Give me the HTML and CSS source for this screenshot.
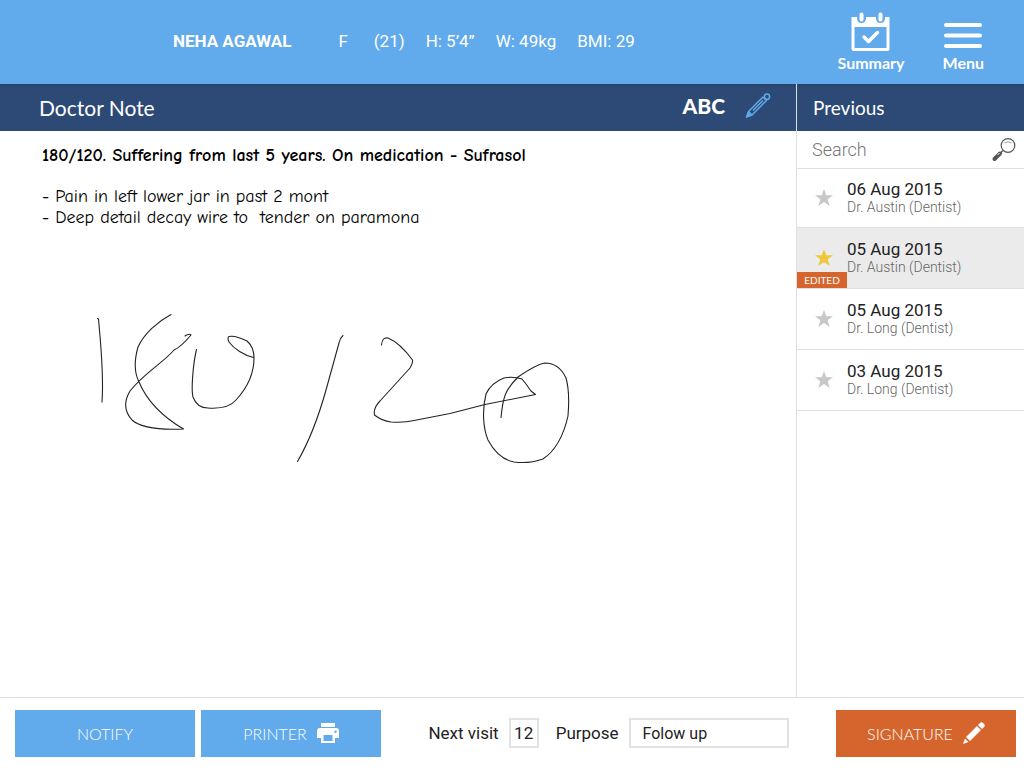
FILE: index.html
```html
<!DOCTYPE html>
<html lang="en">
<head>
<meta charset="utf-8">
<meta name="viewport" content="width=device-width, initial-scale=1">
<title>Doctor Note</title>
<link rel="stylesheet" href="styles.css">
</head>
<body class="app">
<header class="topbar">
  <div class="patient">
    <strong class="patient-name">NEHA AGAWAL</strong>
    <span class="patient-sex">F</span>
    <ul class="vitals">
      <li>(21)</li>
      <li>H: 5’4”</li>
      <li>W: 49kg</li>
      <li>BMI: 29</li>
    </ul>
  </div>
  <nav class="topnav">
    <button class="nav-button" type="button">
      <svg class="nav-icon" width="40" height="40" viewBox="0 0 40 40" aria-hidden="true">
        <path fill="#fff" fill-rule="evenodd" d="M1.500 5H6V6.500Q6.500 11 10.500 11T15 6.500V5H25V6.500Q25.500 11 29.500 11T34 6.500V5H38.500V37Q38.500 39 36.500 39H2.500Q.500 39 .500 37V5ZM3.500 15V36H35.500V15Z"/>
        <path d="M10.500 2.500V7.500M29.500 2.500V7.500" stroke="#fff" stroke-width="4" stroke-linecap="round"/>
        <path d="M13 25L17.500 29.500L26.500 20.500" fill="none" stroke="#fff" stroke-width="3.500" stroke-linecap="round" stroke-linejoin="round"/>
      </svg>
      Summary
    </button>
    <button class="nav-button" type="button">
      <svg class="nav-icon" width="40" height="40" viewBox="0 0 40 40" aria-hidden="true">
        <path d="M3 13H37M3 23.500H37M3 34H37" stroke="#fff" stroke-width="4" stroke-linecap="round"/>
      </svg>
      Menu
    </button>
  </nav>
</header>
<main class="workspace">
  <section class="note">
    <div class="titlebar note-titlebar">
      <h1 class="note-title">Doctor Note</h1>
      <button class="tool-text" type="button">ABC</button>
      <button class="tool-pen" type="button" aria-label="Draw">
        <svg width="26" height="26" viewBox="0 0 26 26" aria-hidden="true">
          <g fill="none" stroke="#62a9ea" stroke-width="1.500" stroke-linejoin="round">
            <path d="M1.500 24L3.500 18.500L18 4L21.500 7.500L7 22Z"/>
            <path d="M3.500 18.500L7 22M8 17.500L18 7.500"/>
            <circle cx="22" cy="3.700" r="2.600"/>
          </g>
          <path d="M1 24.500L3 19L6.500 22.500Z" fill="#62a9ea"/>
        </svg>
      </button>
    </div>
    <div class="note-body">
      <p class="note-lead">180/120. Suffering from last 5 years. On medication - Sufrasol</p>
      <p class="note-lines">- Pain in left lower jar in past 2 mont
- Deep detail decay wire to  tender on paramona</p>
      <svg class="ink" width="490" height="160" viewBox="90 308 490 160" role="img" aria-label="Handwritten 180/20">
        <g fill="none" stroke="#222" stroke-width="1.100" stroke-linecap="round" stroke-linejoin="round">
          <path d="M97.500 318.500L98.500 319C101 347 104 375 102 402"/>
          <path d="M171 314.500C157 322 144 334 138 347C134 361 135 374 139 382C147 401 163 417 183.500 429C162 430 142 429 132 420C124 411 124 401 130 391C144 373 163 363 174 350C181 347 186 341 191 335Q189 333 185 336"/>
          <path d="M196.500 349.500C193 364 191 390 193 397Q197 408 208 408C222 409 231 406 236 400C248 387 254 372 254 358Q254 347 247 341Q235 335 229 336.500Q227 337 229 342C234 349 244 355 253.500 357.500"/>
          <path d="M343 335.500Q340 338 339 343L326 390Q314 433 297.500 461.500"/>
          <path d="M381.500 345Q382 337 388 338Q400 343 412.500 360Q413 363 410 368L380 401Q373 408 374.500 415Q382 421 391 422Q404 423 414 420.500L450 413.500L485 404.500L535.500 394.500L531 391L526 384L522 379Q513 376 504 378Q491 383 486 394C482 410 483 428 488 440Q498 459 514 462Q529 464 543 459Q561 447 568 416Q570 392 566 378Q559 363 545 363Q537 364 518 377C505 390 503 397 501 417.500"/>
        </g>
      </svg>
    </div>
  </section>
  <aside class="history">
    <div class="titlebar history-titlebar"><h2 class="history-title">Previous</h2></div>
    <form class="search" role="search">
      <input class="search-input" type="search" placeholder="Search" aria-label="Search">
      <button class="search-button" type="submit" aria-label="Search notes">
        <svg width="26" height="26" viewBox="0 0 26 26" aria-hidden="true">
          <circle cx="17" cy="8.500" r="6.800" fill="none" stroke="#555" stroke-width="1.200"/>
          <path d="M13.500 6Q17 3.500 20.500 6" fill="none" stroke="#999" stroke-width="1"/>
          <path d="M12 13.500L9.500 16" stroke="#555" stroke-width="1.500"/>
          <path d="M9 16.500L3.500 22" stroke="#555" stroke-width="4" stroke-linecap="round"/>
          <path d="M8.500 16L6.500 18" stroke="#fff" stroke-width="1"/>
        </svg>
      </button>
    </form>
    <ul class="visits">
      <li class="visit">
        <svg class="star" viewBox="0 0 20 20" aria-hidden="true"><path d="M10 1L12.300 7.300H19L13.700 11.300L15.700 18L10 14L4.300 18L6.300 11.300L1 7.300H7.700Z"/></svg>
        <a class="visit-link" href="#visit-1"><span class="visit-date">06 Aug 2015</span><span class="visit-doctor">Dr. Austin (Dentist)</span></a>
      </li>
      <li class="visit visit-active">
        <svg class="star star-on" viewBox="0 0 20 20" aria-hidden="true"><path d="M10 1L12.300 7.300H19L13.700 11.300L15.700 18L10 14L4.300 18L6.300 11.300L1 7.300H7.700Z"/></svg>
        <a class="visit-link" href="#visit-2"><span class="visit-date">05 Aug 2015</span><span class="visit-doctor">Dr. Austin (Dentist)</span></a>
        <span class="badge">EDITED</span>
      </li>
      <li class="visit">
        <svg class="star" viewBox="0 0 20 20" aria-hidden="true"><path d="M10 1L12.300 7.300H19L13.700 11.300L15.700 18L10 14L4.300 18L6.300 11.300L1 7.300H7.700Z"/></svg>
        <a class="visit-link" href="#visit-3"><span class="visit-date">05 Aug 2015</span><span class="visit-doctor">Dr. Long (Dentist)</span></a>
      </li>
      <li class="visit">
        <svg class="star" viewBox="0 0 20 20" aria-hidden="true"><path d="M10 1L12.300 7.300H19L13.700 11.300L15.700 18L10 14L4.300 18L6.300 11.300L1 7.300H7.700Z"/></svg>
        <a class="visit-link" href="#visit-4"><span class="visit-date">03 Aug 2015</span><span class="visit-doctor">Dr. Long (Dentist)</span></a>
      </li>
    </ul>
  </aside>
</main>
<footer class="actions">
  <div class="action-group">
    <button class="action" type="button">NOTIFY</button>
    <button class="action" type="button">PRINTER
      <svg width="22" height="20" viewBox="0 0 22 20" aria-hidden="true">
        <path fill="#fff" fill-rule="evenodd" d="M4 0H18V4H4ZM3 5H19Q22 5 22 8V15H18V20H4V15H0V8Q0 5 3 5ZM6.500 12V18H15.500V12ZM18.500 7.500A1.200 1.200 0 1 0 18.500 10A1.200 1.200 0 1 0 18.500 7.500Z"/>
      </svg>
    </button>
  </div>
  <form class="next-visit">
    <label class="field-label" for="visit-days">Next visit</label>
    <input class="field field-days" id="visit-days" type="text" value="12">
    <label class="field-label purpose-label" for="purpose">Purpose</label>
    <input class="field field-purpose" id="purpose" type="text" value="Folow up">
  </form>
  <button class="action action-sign" type="button">SIGNATURE
    <svg width="22" height="22" viewBox="0 0 22 22" aria-hidden="true">
      <path fill="#fff" d="M0 22L2 16.500L5.500 20ZM3 15L14 4L18 8L7 19ZM15 3L17.500 .500Q18.500 0 19.500 .500L21.500 2.500Q22 3.500 21.500 4.500L19 7Z"/>
    </svg>
  </button>
</footer>
</body>
</html>
```
FILE: styles.css
```css
* { box-sizing: border-box; }

.app {
  margin: 0;
  min-height: 100vh;
  display: flex;
  flex-direction: column;
  background: #fff;
  color: #222;
  font-family: Roboto, "Liberation Sans", sans-serif;
}

button, input { font: inherit; }

button {
  border: 0;
  padding: 0;
  background: none;
  color: inherit;
  cursor: pointer;
}

ul { list-style: none; margin: 0; padding: 0; }
h1, h2, p { margin: 0; }

.topbar {
  min-height: 84px;
  display: flex;
  justify-content: space-between;
  align-items: center;
  padding: 2px 40px 0 173px;
  background: #61aaeb;
  color: #fff;
}

.patient {
  display: flex;
  align-items: center;
  padding-bottom: 4px;
  font-size: 17px;
  line-height: 24px;
}

.patient-name { font-weight: 700; }
.patient-sex { margin: 0 26px 0 47px; }
.vitals { display: flex; gap: 21px; }

.topnav { display: flex; gap: 38px; }

.nav-button {
  display: flex;
  flex-direction: column;
  align-items: center;
  font-family: Lato, sans-serif;
  font-weight: 700;
  font-size: 16px;
  line-height: 22px;
}

.nav-icon { display: block; }

.workspace {
  flex: 1;
  display: grid;
  grid-template-columns: minmax(0, 1fr) 228px;
}

.titlebar {
  height: 47px;
  display: flex;
  align-items: center;
  background: linear-gradient(#27426c, #2c4a75 4px);
  color: #fff;
  font-family: Lato, sans-serif;
}

.note { display: flex; flex-direction: column; }
.note-titlebar { padding: 0 25px 4px 39px; }

.note-title {
  flex: 1;
  padding-top: 4px;
  font-size: 21px;
  line-height: 28px;
  font-weight: 400;
}

.tool-text {
  margin-right: 20px;
  font-size: 21px;
  font-weight: 900;
}

.tool-pen { display: flex; }

.note-body {
  padding: 14px 16px 12px 42px;
  color: #000;
  font-family: "Comic Neue", Inter, sans-serif;
  font-size: 18px;
  line-height: 21px;
}

.note-lead {
  margin-bottom: 20px;
  font-weight: 700;
}

.note-lines { white-space: pre-wrap; font-weight: 400; }
.ink { display: block; margin: 80px 0 0 48px; max-width: 100%; }

.history { border-left: 1px solid #dfdfdf; }
.history-titlebar { padding: 0 16px; }

.history-title {
  font-size: 19px;
  line-height: 28px;
  font-weight: 400;
}

.search {
  height: 38px;
  display: flex;
  align-items: center;
  padding: 0 7px 0 15px;
  border-bottom: 1px solid #dfdfdf;
}

.search-input {
  flex: 1;
  min-width: 0;
  border: 0;
  padding: 0;
  outline: 0;
  background: none;
  font-size: 18px;
  font-weight: 300;
}

.search-input::placeholder { color: #777; opacity: 1; }
.search-button { display: flex; }

.visit {
  position: relative;
  min-height: 59px;
  display: flex;
  align-items: center;
  gap: 13px;
  padding: 0 16px 0 17px;
  border-bottom: 1px solid #dfdfdf;
}

.visit + .visit { min-height: 61px; }

.visit-active { background: #ebebeb; }
.star { width: 20px; height: 20px; flex: none; fill: #c8c8c8; }
.star-on { fill: #f0c63c; }

.visit-link {
  display: flex;
  flex-direction: column;
  padding-bottom: 2px;
  color: #222;
  text-decoration: none;
}

.visit-date { font-size: 17px; line-height: 20px; }

.visit-doctor {
  color: #666;
  font-size: 14px;
  line-height: 16px;
  font-weight: 300;
}

.badge {
  position: absolute;
  left: 0;
  bottom: 0;
  width: 50px;
  background: #d5652c;
  color: #fff;
  font-family: Lato, sans-serif;
  font-size: 10px;
  line-height: 16px;
  text-align: center;
}

.actions {
  min-height: 71px;
  display: flex;
  align-items: center;
  justify-content: space-between;
  padding: 0 8px 0 15px;
  border-top: 1px solid #dfdfdf;
}

.action-group { display: flex; gap: 6px; }

.action {
  width: 180px;
  height: 47px;
  display: flex;
  align-items: center;
  justify-content: center;
  gap: 10px;
  background: #61aaeb;
  color: #fff;
  font-family: Lato, sans-serif;
  font-size: 16px;
  font-weight: 300;
}

.action-sign { background: #d5652c; }

.next-visit { display: flex; align-items: center; }

.field-label { font-size: 17px; line-height: 24px; }
.purpose-label { margin-left: 17px; }

.field {
  height: 30px;
  margin-left: 10px;
  border: 2px solid #e2e2e2;
  padding: 0;
  color: #222;
  font-size: 17px;
}

.field-days { width: 30px; text-align: center; }

.field-purpose {
  width: 160px;
  padding: 0 12px;
  font-size: 16px;
}
```
